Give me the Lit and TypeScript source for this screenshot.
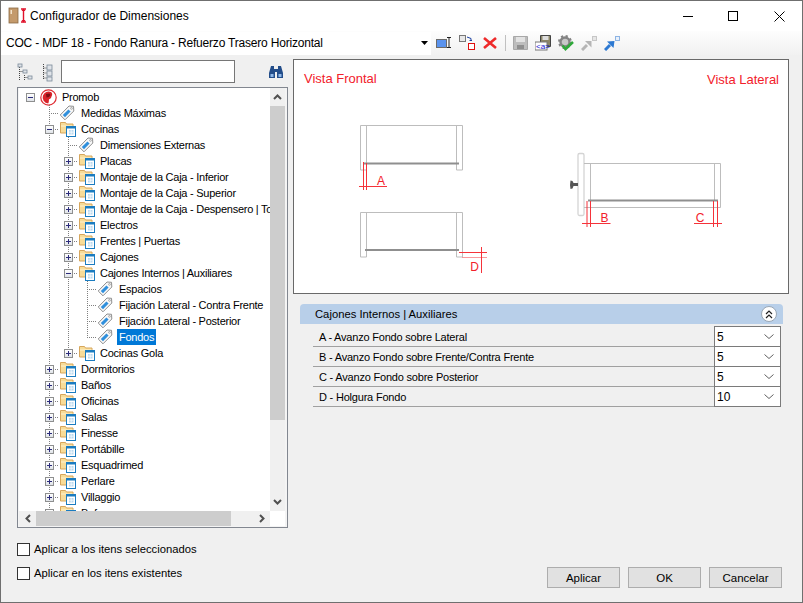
import { LitElement, html, css, svg } from "lit";
import { customElement } from "lit/decorators.js";

type Row = { d: number; t: string; i: "logo" | "tag" | "folder"; e?: "+" | "-"; last?: boolean; sel?: boolean };

const rows: Row[] = [
  { d: 0, t: "Promob", i: "logo", e: "-" },
  { d: 1, t: "Medidas Máximas", i: "tag" },
  { d: 1, t: "Cocinas", i: "folder", e: "-" },
  { d: 2, t: "Dimensiones Externas", i: "tag" },
  { d: 2, t: "Placas", i: "folder", e: "+" },
  { d: 2, t: "Montaje de la Caja - Inferior", i: "folder", e: "+" },
  { d: 2, t: "Montaje de la Caja - Superior", i: "folder", e: "+" },
  { d: 2, t: "Montaje de la Caja - Despensero | Torre", i: "folder", e: "+" },
  { d: 2, t: "Electros", i: "folder", e: "+" },
  { d: 2, t: "Frentes | Puertas", i: "folder", e: "+" },
  { d: 2, t: "Cajones", i: "folder", e: "+" },
  { d: 2, t: "Cajones Internos | Auxiliares", i: "folder", e: "-" },
  { d: 3, t: "Espacios", i: "tag" },
  { d: 3, t: "Fijación Lateral - Contra Frente", i: "tag" },
  { d: 3, t: "Fijación Lateral - Posterior", i: "tag" },
  { d: 3, t: "Fondos", i: "tag", last: true, sel: true },
  { d: 2, t: "Cocinas Gola", i: "folder", e: "+", last: true },
  ...["Dormitorios", "Baños", "Oficinas", "Salas", "Finesse", "Portábille", "Esquadrimed", "Perlare", "Villaggio", "Bofore"].map(
    (t): Row => ({ d: 1, t, i: "folder", e: "+" })
  ),
];

const params = [
  ["A - Avanzo Fondo sobre Lateral", "5"],
  ["B - Avanzo Fondo sobre Frente/Contra Frente", "5"],
  ["C - Avanzo Fondo sobre Posterior", "5"],
  ["D - Holgura Fondo", "10"],
];

const folderIcon = html`<svg width="17" height="16" viewBox="0 0 17 16">
  <path d="M1.500 12V1.500h5l1 1.500h6.500v9z" fill="#f8dc98" stroke="#d6a65c"/>
  <path d="M2 5h11.500" stroke="#fdf2cf"/>
  <rect x="7.500" y="5.500" width="9" height="10" fill="#fff" stroke="#1b7cc0"/>
  <path d="M8 6h8v1.500H8z" fill="#1b7cc0"/>
  <path d="M10 9h4.500v4.500H10z" fill="#b9d9ef"/>
  <path d="M12.200 9v4.500M10 11.200h4.500" stroke="#fff" stroke-width=".7"/>
</svg>`;

const tagIcon = html`<svg width="16" height="16" viewBox="0 0 16 16">
  <path d="M10 1l4.500.3.300 4.700L6 14.800 1.200 10z" fill="#f8f8f8" stroke="#8f8f8f"/>
  <path d="M3.800 10l5.600-5.600 2.200 2.200L6 12.200z" fill="#2f8fdc"/>
  <circle cx="12.500" cy="3.400" r=".9" fill="#fff" stroke="#8f8f8f" stroke-width=".7"/>
</svg>`;

const logoIcon = html`<svg width="17" height="17" viewBox="0 0 17 17">
  <circle cx="8.500" cy="8.500" r="7.700" fill="#fff" stroke="#df2c33" stroke-width="1.200"/>
  <path d="M3 6.500A6 6 0 0 1 11 3c1.500 1 1.500 3 .5 4.500-.4 2-1.500 2.500-2.500 2.700-.2 1.500 0 3-.8 4.300A6 6 0 0 1 3 6.500z" fill="#d8232a"/>
  <path d="M6 5l3.500-.5 1 1.500-1.500 2-2.500.5z" fill="#7c1014"/>
</svg>`;

const icons = { folder: folderIcon, tag: tagIcon, logo: logoIcon };

const chev = (up: boolean) => html`<svg width="9" height="6" viewBox="0 0 9 6">
  <path d="${up ? "M1 5l3.500-3.500L8 5" : "M1 1l3.500 3.500L8 1"}" fill="none" stroke="#505050" stroke-width="2"/>
</svg>`;

const chevH = (left: boolean) => html`<svg width="6" height="9" viewBox="0 0 6 9">
  <path d="${left ? "M5 1L1.500 4.500 5 8" : "M1 1l3.500 3.500L1 8"}" fill="none" stroke="#505050" stroke-width="2"/>
</svg>`;

const R = "#f5333a";

const drawing = svg`
  <g fill="none" stroke="#bdbdbd">
    <path d="M360.500 125.500h102v44.500h-6V125.500M366.500 125.500V170h-6V125.500"/>
    <path d="M360.500 212.500h102v44.500h-6V212.500M366.500 212.500V257h-6V212.500"/>
    <rect x="578" y="153.500" width="6" height="62" rx="1.500" stroke="#d4d4d4" stroke-width="1.300" fill="#fff"/>
    <path d="M584 163.500h136.500v44H584M590.500 163.500V200M714.500 163.500V200"/>
  </g>
  <g stroke="#8f8f8f" stroke-width="2">
    <path d="M364 163.500h95M365 250h94M588 200.500h130"/>
  </g>
  <path d="M570.500 180.500l2 .5 1 2h4.500v3h-4.500l-1 2.500-2 .5-.5-4z" fill="#555"/>
  <g fill="none" stroke="${R}" stroke-width="1">
    <path d="M363.500 162v28M366.500 163v27M359 186.500h28"/>
    <path d="M459 252.500h28M481.500 247v26" />
    <path d="M462 257.500h25" opacity=".5"/>
    <path d="M587 201v26M590.500 201v26M582 223.500h28.500"/>
    <path d="M713.500 201v26M717.500 201v26M694 223.500h28"/>
  </g>
  <g fill="#f2202a" font-family="'Liberation Sans',sans-serif">
    <text x="304" y="83" font-size="13">Vista Frontal</text>
    <text x="779" y="84" font-size="13" text-anchor="end">Vista Lateral</text>
    <g font-size="12" text-anchor="middle">
      <text x="381" y="185">A</text>
      <text x="474.500" y="271">D</text>
      <text x="604.500" y="222">B</text>
      <text x="700" y="222">C</text>
    </g>
  </g>
`;

@customElement("app-root")
export class AppRoot extends LitElement {
  static styles = css`
    :host {
      display: flex;
      flex-direction: column;
      width: 803px;
      height: 603px;
      box-sizing: border-box;
      border: 1px solid #6f6f6f;
      background: #f0f0f0;
      font: 11px "Liberation Sans", Arial, sans-serif;
      color: #000;
      overflow: hidden;
    }
    svg { display: block; flex: none; }
    .title { height: 30px; background: #fff; display: flex; align-items: center; padding-left: 7px; flex: none; }
    .title .name { margin-left: 2px; font-size: 12px; }
    .wbtns { margin-left: auto; display: flex; }
    .wbtn { width: 45px; height: 30px; display: flex; align-items: center; justify-content: center; }
    .wbtn:last-child { width: 46px; }
    .toolbar { height: 24px; flex: none; display: flex; align-items: center; background: linear-gradient(#fdfdfd, #f1f1f1); }
    .preset { width: 430px; height: 23px; box-sizing: border-box; background: #fff; display: flex; align-items: center; padding: 0 0 0 5px; font-size: 12px; letter-spacing: -0.2px; }
    .preset span { flex: 1; }
    .preset svg { margin-right: 3px; }
    .tools { display: flex; align-items: center; gap: 7px; margin-left: 5px; }
    .sep { width: 1px; height: 16px; background: #c0c0c0; }
    .main { flex: 1; display: flex; min-height: 0; padding: 5px 7px 14px 16px; gap: 5px; }
    .left { width: 271px; display: flex; flex-direction: column; flex: none; }
    .search { height: 23px; display: flex; align-items: center; margin-bottom: 4px; padding-right: 4px; }
    .search input { box-sizing: border-box; width: 174px; height: 23px; margin-left: 6px; border: 1px solid #767676; background: #fff; padding: 0; }
    .search .gap { margin-left: auto; }
    .search .first { margin-right: 8px; }
    .tree { height: 441px; box-sizing: border-box; border: 1px solid #828790; padding: 0 2px 1px 1px; display: grid; grid-template-columns: 1fr 15px; grid-template-rows: 1fr 15px; background: #f4f4f4; }
    .list { overflow: hidden; padding: 1px 0 0 2px; min-width: 0; background: #fff; }
    .row { height: 16px; display: flex; align-items: center; white-space: nowrap; letter-spacing: -0.25px; }
    .cell { width: 19px; height: 16px; flex: none; display: flex; align-items: center; justify-content: center; }
    .v { background: repeating-linear-gradient(to bottom, #808080 0 1px, transparent 1px 2px) 9px 0 / 1px 100% no-repeat; }
    .vh { background: repeating-linear-gradient(to bottom, #808080 0 1px, transparent 1px 2px) 9px 0 / 1px 100% no-repeat,
      repeating-linear-gradient(to right, #808080 0 1px, transparent 1px 2px) 9px 8px / 10px 1px no-repeat; }
    .lh { background: repeating-linear-gradient(to bottom, #808080 0 1px, transparent 1px 2px) 9px 0 / 1px 8px no-repeat,
      repeating-linear-gradient(to right, #808080 0 1px, transparent 1px 2px) 9px 8px / 10px 1px no-repeat; }
    .exp { width: 9px; height: 9px; box-sizing: border-box; border: 1px solid #8e8f8f; background: linear-gradient(#fff, #dfe3e8); }
    .ic { width: 17px; height: 16px; flex: none; display: flex; align-items: center; margin-right: 3px; }
    .lbl { padding: 0 2px; height: 16px; line-height: 16px; }
    .lbl.sel { background: #0078d7; color: #fff; }
    .vbar { grid-row: 1; grid-column: 2; background: #f0f0f0; display: flex; flex-direction: column; align-items: center; }
    .vbar .arrow { height: 18px; display: flex; align-items: center; flex: none; }
    .vbar .thumb { width: 15px; height: 314px; background: #cdcdcd; flex: none; }
    .vbar .end { margin-top: auto; }
    .hbar { grid-row: 2; grid-column: 1; background: #f0f0f0; display: flex; align-items: center; }
    .hbar .arrow { width: 17px; display: flex; justify-content: center; flex: none; }
    .hbar .thumb { width: 195px; height: 15px; background: #cdcdcd; flex: none; }
    .hbar .end { margin-left: auto; }
    .corner { grid-row: 2; grid-column: 2; background: #fff; }
    .chk { display: flex; align-items: center; height: 14px; gap: 4px; margin-top: 10px; font-size: 11.25px; }
    .chk.a { margin-top: 14px; }
    .chk i { width: 13px; height: 13px; box-sizing: border-box; border: 1px solid #333; background: #fff; flex: none; }
    .right { width: 496px; flex: none; display: flex; flex-direction: column; margin-top: -1px; }
    .preview { width: 496px; height: 235px; box-sizing: border-box; border: 1px solid #696969; background: #fff; flex: none; }
    .hdr { margin: 10px 6px 0 7px; height: 20px; background: #b8cfe9; border-radius: 4px 4px 0 0; display: flex; align-items: center; padding: 0 6px 0 15px; font-size: 11.25px; }
    .hdr span { flex: 1; }
    .collapse { width: 16px; height: 16px; box-sizing: border-box; border: 1px solid #9aa7b5; border-radius: 50%; background: #fff; display: flex; align-items: center; justify-content: center; }
    .grid { margin: 3px 8px 0 20px; }
    .prow { height: 20px; display: flex; box-sizing: border-box; border-bottom: 1px solid #a0a0a0; }
    .prow .lab { flex: 1; padding-left: 6px; line-height: 20px; letter-spacing: -0.2px; }
    .combo { width: 67px; box-sizing: border-box; background: #fff; border: 1px solid #7a7a7a; border-bottom: 0; display: flex; align-items: center; padding: 0 6px 0 2px; justify-content: space-between; font-size: 12px; margin-top: -1px; height: 20px; }
    .prow:last-child .combo { border-bottom: 1px solid #7a7a7a; height: 21px; }
    .btns { margin-top: auto; display: flex; gap: 8px; padding-right: 7px; justify-content: flex-end; }
    .btn { width: 73px; height: 21px; box-sizing: border-box; background: #e1e1e1; border: 1px solid #adadad; display: flex; align-items: center; justify-content: center; font-size: 11.5px; }
  `;

  private cells(r: Row) {
    const out = [];
    for (let k = 0; k < r.d; k++) {
      const line = k === 1 || (k === 2 && r.d === 3);
      out.push(html`<span class="cell ${line ? "v" : ""}"></span>`);
    }
    const conn = r.d === 0 ? "" : r.last ? "lh" : "vh";
    out.push(html`<span class="cell ${conn}">${r.e ? this.expander(r.e) : ""}</span>`);
    return out;
  }

  private expander(e: string) {
    return html`<svg class="exp" viewBox="0 0 7 7" width="9" height="9">
      <path d="${e === "+" ? "M1 3.500h5M3.500 1v5" : "M1 3.500h5"}" stroke="#2b2b7a" fill="none"/>
    </svg>`;
  }

  render() {
    return html`
      <div class="title">
        <svg width="20" height="18" viewBox="0 0 20 18">
          <rect x="1" y="1" width="9" height="15" fill="#c49a6c" stroke="#8a6a45" stroke-width=".8"/>
          <rect x="2.500" y="3" width="1.500" height="4" fill="#f3e3cc"/>
          <path d="M13 2h5M15.500 2v13M13 15h5" stroke="#e0102a" stroke-width="1.400" fill="none"/>
          <path d="M13.500 4h4l-2-2.500zM13.500 13h4l-2 2.500z" fill="#e0102a"/>
        </svg>
        <span class="name">Configurador de Dimensiones</span>
        <div class="wbtns">
          <div class="wbtn"><svg width="11" height="11"><path d="M0 5.500h10" stroke="#000"/></svg></div>
          <div class="wbtn"><svg width="11" height="11"><rect x=".5" y=".5" width="9" height="9" fill="none" stroke="#000"/></svg></div>
          <div class="wbtn"><svg width="11" height="11"><path d="M.5.500l10 10M10.500.500l-10 10" stroke="#000"/></svg></div>
        </div>
      </div>
      <div class="toolbar">
        <div class="preset">
          <span>COC - MDF 18 - Fondo Ranura - Refuerzo Trasero Horizontal</span>
          <svg width="7" height="4"><path d="M0 0h7L3.500 4z" fill="#000"/></svg>
        </div>
        <div class="tools">
          <svg width="16" height="16" viewBox="0 0 16 16"><rect x=".5" y="4.500" width="10" height="8" fill="#5a93ee" stroke="#6a6a6a"/><path d="M11 2.500h4M13 2.500v10M11 12.500h4" stroke="#222" fill="none"/></svg>
          <svg width="16" height="16" viewBox="0 0 16 16"><rect x=".5" y=".5" width="6" height="6" fill="#e8e8e8" stroke="#777"/><rect x="9.500" y="8.500" width="6" height="6" fill="#fff" stroke="#e01010"/><path d="M8 2l4 1.500V6M10.500 5.500H13" fill="none" stroke="#1a3fa0"/></svg>
          <svg width="16" height="16" viewBox="0 0 16 16"><path d="M2 3l12 10M14 3L2 13" stroke="#ee2a2a" stroke-width="2.600"/></svg>
          <span class="sep"></span>
          <svg width="15" height="16" viewBox="0 0 15 16"><path d="M.5 1.500h14v13H.5z" fill="#bdbdbd" stroke="#a8a8a8"/><rect x="3" y="2" width="9" height="5" fill="#e3e3e3"/><rect x="4" y="10" width="7" height="4" fill="#8f8f8f"/></svg>
          <svg width="16" height="16" viewBox="0 0 16 16"><path d="M5.500.500h10v11h-10z" fill="#8c8668" stroke="#444"/><rect x="7.500" y="1" width="6" height="4" fill="#ddd"/><rect x="0" y="7" width="12" height="8" fill="#fff" stroke="#777"/><text x="1" y="14" font-size="8" fill="#1010d0" font-family="Liberation Sans">&lt;a=</text></svg>
          <svg width="16" height="16" viewBox="0 0 16 16"><circle cx="7" cy="7" r="4.500" fill="#c8c8c8" stroke="#848484" stroke-width="2.400"/><circle cx="7" cy="7" r="6" fill="none" stroke="#848484" stroke-width="2" stroke-dasharray="2.200 2.500"/><path d="M4.500 10.500l3 3.500 7.500-7" fill="none" stroke="#2fa83a" stroke-width="2.600"/></svg>
          <svg width="16" height="16" viewBox="0 0 16 16"><path d="M1 15l5-5" stroke="#b5b5b5" stroke-width="3"/><path d="M4 6h6.500v6.500z" fill="#b5b5b5"/><rect x="11.500" y="1.500" width="4" height="4" fill="#e6e6e6" stroke="#c6c6c6"/></svg>
          <svg width="16" height="16" viewBox="0 0 16 16"><path d="M1 15l5-5" stroke="#2d79d2" stroke-width="3"/><path d="M3 6.500l6.500 6.500 1-7z" fill="#2d79d2"/><rect x="11.500" y="1.500" width="4" height="4" fill="#e9f1fb" stroke="#8db4e4"/></svg>
        </div>
      </div>
      <div class="main">
        <div class="left">
          <div class="search">
            <svg class="first" width="16" height="20" viewBox="0 0 16 20"><g fill="none" stroke="#444" stroke-dasharray="1 1"><path d="M2.500 5v14M2.500 9.500h4M7.500 13v6M7.500 15.500h3"/></g><g fill="#dfe3e8" stroke="#7b8a9a" stroke-width=".8"><rect x="1" y="2" width="4" height="3"/><rect x="6" y="8" width="4" height="3"/><rect x="11" y="14" width="4" height="3"/></g></svg>
            <svg width="14" height="20" viewBox="0 0 14 20"><path d="M2.500 2v16M2.500 6h4M2.500 11h4M2.500 16h4" stroke="#444" fill="none" stroke-dasharray="1 1"/><g fill="#dfe3e8" stroke="#7b8a9a" stroke-width=".8"><rect x="6" y="3" width="5" height="5"/><rect x="6" y="9" width="5" height="5"/><rect x="6" y="15" width="5" height="4"/></g></svg>
            <input aria-label="buscar" />
            <svg class="gap" width="16" height="14" viewBox="0 0 16 14"><path d="M3 1h3v3h4V1h3l2 7v5H9V7H7v6H1V8z" fill="#234d8a"/><path d="M2.500 9h3v3h-3zM10.500 9h3v3h-3z" fill="#8fb8e8"/></svg>
          </div>
          <div class="tree">
            <div class="list">
              ${rows.map(
                (r) => html`<div class="row">
                  ${this.cells(r)}
                  <span class="ic">${icons[r.i]}</span>
                  <span class="lbl ${r.sel ? "sel" : ""}">${r.t}</span>
                </div>`
              )}
            </div>
            <div class="vbar">
              <span class="arrow">${chev(true)}</span>
              <span class="thumb"></span>
              <span class="arrow end">${chev(false)}</span>
            </div>
            <div class="hbar">
              <span class="arrow">${chevH(true)}</span>
              <span class="thumb"></span>
              <span class="arrow end">${chevH(false)}</span>
            </div>
            <div class="corner"></div>
          </div>
          <label class="chk a"><i></i>Aplicar a los itens seleccionados</label>
          <label class="chk"><i></i>Aplicar en los itens existentes</label>
        </div>
        <div class="right">
          <div class="preview">
            <svg width="494" height="233" viewBox="294 60 494 233">${drawing}</svg>
          </div>
          <div class="hdr">
            <span>Cajones Internos | Auxiliares</span>
            <div class="collapse">
              <svg width="8" height="9" viewBox="0 0 8 9"><path d="M1 4l3-3 3 3M1 8l3-3 3 3" fill="none" stroke="#222" stroke-width="1.200"/></svg>
            </div>
          </div>
          <div class="grid">
            ${params.map(
              ([l, v]) => html`<div class="prow">
                <span class="lab">${l}</span>
                <div class="combo">
                  <span>${v}</span>
                  <svg width="10" height="5" viewBox="0 0 10 5"><path d="M.5.500L5 4.500 9.500.500" fill="none" stroke="#606060"/></svg>
                </div>
              </div>`
            )}
          </div>
          <div class="btns">
            <div class="btn">Aplicar</div>
            <div class="btn">OK</div>
            <div class="btn">Cancelar</div>
          </div>
        </div>
      </div>
    `;
  }
}
